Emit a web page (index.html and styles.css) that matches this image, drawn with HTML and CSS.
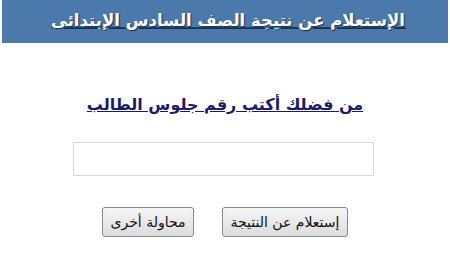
FILE: index.html
```html
<!DOCTYPE html>
<html lang="ar" dir="rtl">
<head>
<meta charset="utf-8">
<link rel="stylesheet" href="styles.css">
</head>
<body>
<div class="page">
  <header class="bar"><span class="bar-title">الإستعلام عن نتيجة الصف السادس الإبتدائى</span></header>
  <main class="form">
    <h2 class="prompt">من فضلك أكتب رقم جلوس الطالب</h2>
    <input class="field" type="text">
    <div class="actions">
      <button class="btn btn-wide" type="button">إستعلام عن النتيجة</button>
      <button class="btn" type="button">محاولة أخرى</button>
    </div>
  </main>
</div>
</body>
</html>
```
FILE: styles.css
```css
html, body { margin: 0; padding: 0; background: #fff; }
body { width: 450px; height: 280px; overflow: hidden; font-family: "DejaVu Sans", "Liberation Sans", sans-serif; }
.page { padding: 0 2px; }
.bar {
  height: 43px;
  background: #4c79ab;
  display: flex;
  justify-content: center;
  align-items: center;
}
.bar-title {
  color: #fff;
  font-weight: bold;
  font-size: 16.5px;
  text-decoration: underline;
  text-decoration-color: #2a3a55;
  text-shadow: 1px 1px 1px #1a3050;
  margin-top: -2px;
  margin-left: 6px;
}
.form {
  display: flex;
  flex-direction: column;
  align-items: center;
}
.prompt {
  margin: 52px 0 0;
  font-size: 16px;
  font-weight: bold;
  color: #1b1b6b;
  text-decoration: underline;
}
.field {
  margin-top: 28px;
  width: 301px;
  height: 34px;
  box-sizing: border-box;
  border: 1px solid #d8d8d8;
  background: #fff;
  margin-right: 4px;
}
.actions {
  margin-top: 31px;
  display: flex;
  gap: 28px;
}
.btn {
  height: 30px;
  width: 92px;
  padding: 0;
  font-family: "DejaVu Sans", sans-serif;
  font-size: 14px;
  color: #111;
  border: 1px solid #8a8a8a;
  border-radius: 3px;
  background: linear-gradient(#f6f6f6, #dcdcdc);
}
.btn-wide { width: 126px; }
```
